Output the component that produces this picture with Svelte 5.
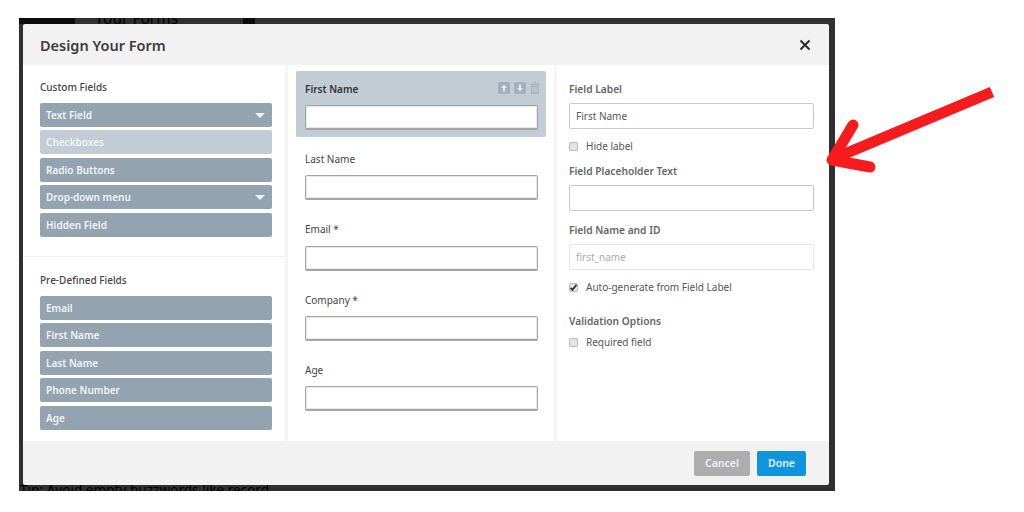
<script>
  const customFields = [
    { label: "Text Field", caret: true },
    { label: "Checkboxes", muted: true },
    { label: "Radio Buttons" },
    { label: "Drop-down menu", caret: true },
    { label: "Hidden Field" }
  ];
  const predefinedFields = ["Email", "First Name", "Last Name", "Phone Number", "Age"];
  const formFields = ["Last Name", "Email *", "Company *", "Age"];
</script>

<div class="page">
  <div class="backdrop">
    <div class="behind top">Your Forms</div>
    <div class="behind bottom">Tip: Avoid empty buzzwords like record</div>
    <div class="modal">
      <header>
        <h1>Design Your Form</h1>
        <svg class="close" viewBox="0 0 12 12" width="12" height="12">
          <path d="M1.500 1.500l9 9M10.500 1.500l-9 9" stroke="#2b2b2b" stroke-width="2" fill="none" />
        </svg>
      </header>

      <div class="columns">
        <aside class="col palette">
          <section class="custom">
            <h2>Custom Fields</h2>
            {#each customFields as field}
              <div class="chip" class:muted={field.muted}>
                <span>{field.label}</span>
                {#if field.caret}<i class="caret"></i>{/if}
              </div>
            {/each}
          </section>
          <section class="predefined">
            <h2>Pre-Defined Fields</h2>
            {#each predefinedFields as label}
              <div class="chip"><span>{label}</span></div>
            {/each}
          </section>
        </aside>

        <main class="col preview">
          <div class="selected">
            <div class="selected-head">
              <strong>First Name</strong>
              <div class="tools">
                <svg viewBox="0 0 12 12" width="12" height="12">
                  <rect width="12" height="12" rx="1.500" fill="#a3b0bb" />
                  <path d="M6 2.500L9 6H7.200v3.500H4.800V6H3z" fill="#dfe5ea" />
                </svg>
                <svg viewBox="0 0 12 12" width="12" height="12">
                  <rect width="12" height="12" rx="1.500" fill="#a3b0bb" />
                  <path d="M6 9.500L3 6h1.800V2.500h2.400V6H9z" fill="#dfe5ea" />
                </svg>
                <svg viewBox="0 0 10 12" width="10" height="12">
                  <path d="M0 1.800h10v1.200H0zM3.500.3h3v1h-3zM1 3.500h8V12H1z" fill="#a9b6c0" />
                  <path d="M3 5v5.500M5 5v5.500M7 5v5.500" stroke="#cdd6dd" stroke-width=".8" />
                </svg>
              </div>
            </div>
            <div class="preview-input"></div>
          </div>
          {#each formFields as label}
            <div class="form-field">
              <div class="form-label">{label}</div>
              <div class="preview-input"></div>
            </div>
          {/each}
        </main>

        <aside class="col settings">
          <div class="set-label first">Field Label</div>
          <div class="text-input">First Name</div>
          <div class="check"><i class="box"></i>Hide label</div>
          <div class="set-label">Field Placeholder Text</div>
          <div class="text-input"></div>
          <div class="set-label name">Field Name and ID</div>
          <div class="text-input disabled">first_name</div>
          <div class="check auto">
            <i class="box">
              <svg viewBox="0 0 9 9" width="9" height="9">
                <path d="M1.500 4.800l2 2 4-5" stroke="#333" stroke-width="1.800" fill="none" />
              </svg>
            </i>
            Auto-generate from Field Label
          </div>
          <div class="set-label validation">Validation Options</div>
          <div class="check required"><i class="box"></i>Required field</div>
        </aside>
      </div>

      <footer>
        <div class="btn cancel">Cancel</div>
        <div class="btn done">Done</div>
      </footer>
    </div>
  </div>

  <svg class="arrow" viewBox="0 0 1024 512" width="1024" height="512">
    <path d="M992 92L835 158" stroke="#f61c1d" stroke-width="11" fill="none" />
    <path d="M853 125L832 160L870 167" stroke="#f61c1d" stroke-width="11" fill="none" stroke-linecap="round" stroke-linejoin="round" />
  </svg>
</div>

<style>
  :global(body) {
    margin: 0;
    background: #fff;
  }
  .page {
    width: 1024px;
    height: 512px;
    padding: 18px 0 0 19px;
    box-sizing: border-box;
    position: relative;
    overflow: hidden;
    font-family: "Noto Sans", sans-serif;
    font-size: 10px;
    color: #444;
  }
  .backdrop {
    width: 816px;
    height: 473px;
    box-sizing: border-box;
    padding: 6px 6px 6px 4px;
    background:
      linear-gradient(#0c0c0c, #0c0c0c) 0 0 / 56px 6px no-repeat,
      linear-gradient(#0c0c0c, #0c0c0c) 224px 0 / 12px 6px no-repeat,
      #303030;
    position: relative;
    overflow: hidden;
  }
  .behind {
    position: absolute;
    color: #000;
    white-space: nowrap;
  }
  .behind.top {
    left: 76px;
    top: -9px;
    font-size: 15.500px;
    line-height: 18px;
  }
  .behind.bottom {
    left: 1px;
    bottom: -8px;
    font-size: 13.600px;
    line-height: 18px;
  }
  .modal {
    height: 100%;
    display: flex;
    flex-direction: column;
    background: #f2f2f2;
    border-radius: 2px;
    position: relative;
  }
  header {
    height: 41px;
    flex: none;
    display: flex;
    align-items: center;
    justify-content: space-between;
    padding: 0 18px 0 17px;
  }
  h1 {
    margin: 0;
    font-size: 14.500px;
    font-weight: 600;
    color: #3c3c3c;
  }
  .columns {
    flex: 1;
    display: grid;
    grid-template-columns: 262px 266px 272px;
    column-gap: 3px;
    background: #f6f6f6;
    min-height: 0;
  }
  .col {
    background: #fff;
  }
  .palette {
    display: flex;
    flex-direction: column;
  }
  section {
    padding: 0 13px 0 17px;
  }
  .custom {
    padding-top: 15px;
    height: 192px;
    box-sizing: border-box;
    border-bottom: 1px solid #eee;
  }
  .predefined {
    padding-top: 16px;
  }
  h2 {
    margin: 0 0 8px;
    font-size: 10px;
    line-height: 15px;
    font-weight: 500;
    color: #444;
  }
  .chip {
    height: 24px;
    margin-bottom: 3.400px;
    padding: 0 6px;
    border-radius: 2px;
    background: #94a3b0;
    color: #f2f4f6;
    font-weight: 600;
    display: flex;
    align-items: center;
    justify-content: space-between;
  }
  .chip.muted {
    background: #c1ccd4;
  }
  .caret {
    width: 0;
    height: 0;
    border-left: 5px solid transparent;
    border-right: 5px solid transparent;
    border-top: 5px solid #eef1f3;
    margin-right: 1px;
  }
  .preview {
    padding: 6px 8px 0 8px;
  }
  .selected {
    background: #c1ccd5;
    border-radius: 2px;
    height: 66px;
    padding: 9px 8px 0 9px;
    box-sizing: border-box;
  }
  .selected-head {
    display: flex;
    justify-content: space-between;
    align-items: center;
    height: 18px;
    margin-bottom: 7px;
    color: #333;
  }
  .selected-head strong {
    font-weight: 600;
  }
  .tools {
    display: flex;
    gap: 4px;
    margin-right: -2px;
    margin-top: -3px;
  }
  .tools svg {
    display: block;
  }
  .preview-input {
    height: 25px;
    box-sizing: border-box;
    background: #fff;
    border: 1px solid #a5a5a5;
    border-bottom-width: 2px;
    box-shadow: inset 0 0 0 1px #e8e8e8;
    border-radius: 2px;
  }
  .form-field {
    padding: 14px 8px 0 9px;
    height: 70.330px;
    box-sizing: border-box;
  }
  .form-label {
    height: 16px;
    line-height: 16px;
    margin-bottom: 8.300px;
    color: #444;
  }
  .settings {
    padding: 16px 15px 0 12px;
  }
  .set-label {
    font-size: 10.200px;
    line-height: 16px;
    font-weight: 600;
    color: #666;
    margin-top: 9px;
    margin-bottom: 6px;
  }
  .set-label.first {
    margin-top: 0;
  }
  .set-label.name {
    margin-top: 11px;
  }
  .set-label.validation {
    margin-top: 18px;
    margin-bottom: 5px;
  }
  .text-input {
    height: 26px;
    box-sizing: border-box;
    border: 1px solid #c8c8c8;
    border-radius: 2px;
    padding: 0 6px;
    line-height: 24px;
    color: #555;
  }
  .text-input.disabled {
    border-color: #e6e6e6;
    color: #aaa;
  }
  .check {
    display: flex;
    align-items: center;
    gap: 8px;
    height: 16px;
    margin-top: 9px;
    color: #555;
  }
  .check.required {
    margin-top: 0;
  }
  .box {
    width: 9px;
    height: 9px;
    outline: 1px solid #bbb;
    outline-offset: -1px;
    border-radius: 2px;
    background: #e4e4e4;
    display: block;
    flex: none;
  }
  .box svg {
    display: block;
  }
  footer {
    height: 44px;
    flex: none;
    display: flex;
    justify-content: flex-end;
    align-items: center;
    gap: 7px;
    padding: 0 23px 0 0;
  }
  .btn {
    height: 25px;
    line-height: 25px;
    border-radius: 2px;
    color: #eef;
    font-weight: 600;
    font-size: 10.500px;
    text-align: center;
  }
  .cancel {
    width: 56px;
    background: #adadad;
  }
  .done {
    width: 49px;
    background: #0d96dc;
  }
  .arrow {
    position: absolute;
    left: 0;
    top: 0;
    pointer-events: none;
  }
</style>
